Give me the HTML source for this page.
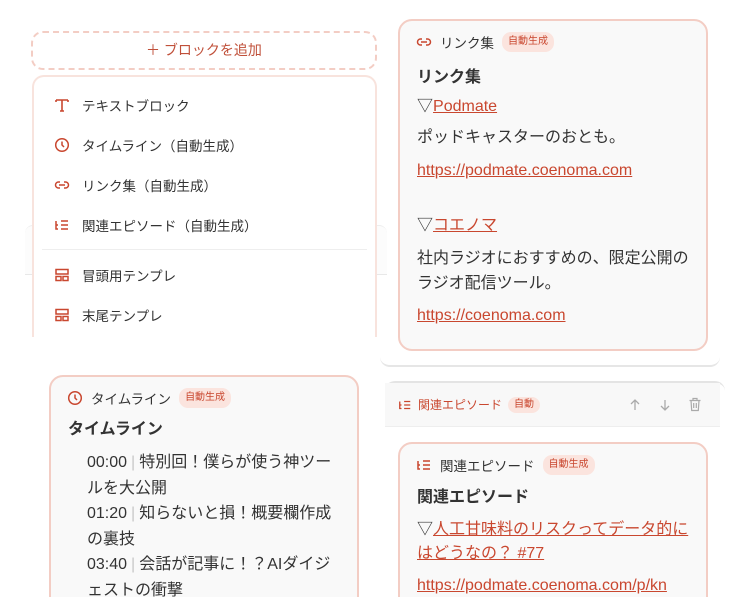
<!DOCTYPE html>
<html><head><meta charset="utf-8"><style>
*{box-sizing:border-box;margin:0;padding:0}
html,body{width:743px;height:597px;overflow:hidden}
body{background:#fff;font-family:"Liberation Sans","Noto Sans CJK JP",sans-serif;color:#333;position:relative}
.abs{position:absolute}
.card{position:absolute;background:#f9f9f9;border:2px solid #f3cdc4;border-radius:14px}
.badge{display:inline-block;background:#fbe4de;color:#c9472f;font-size:10px;border-radius:9px;padding:3px 6px;line-height:14px}
.t{position:absolute;white-space:nowrap}
a{color:#c9472f;text-decoration:underline}
.mi{position:absolute;left:20px;font-size:13.5px;color:#333;display:flex;align-items:center}
.mi svg{margin-right:12px}
.sep{color:#c8c8c8;margin:0 4px}
</style></head><body>

<div class="abs" style="left:25px;top:225px;width:362px;height:50px;border-top:1px solid #eee;border-bottom:1px solid #e8e8e8;background:#fcfcfc;border-radius:8px 8px 0 0"></div>

<div class="abs" style="left:31px;top:31px;width:346px;height:39px;border:2px dashed #f3cdc4;border-radius:12px;color:#c0503a;font-size:14px;text-align:center;line-height:35px">＋ ブロックを追加</div>

<div class="abs" style="left:32px;top:75px;width:345px;height:262px;background:#fff;border:2px solid #f8e3dd;border-bottom:none;border-radius:12px 12px 0 0">
 <div class="mi" style="top:18px"><svg width="16" height="14" viewBox="0 0 16 14"><path d="M2 2h12M8 2v11M6 13h4M2 2v2M14 2v2" stroke="#c9472f" stroke-width="1.6" fill="none"/></svg>テキストブロック</div>
 <div class="mi" style="top:58px"><svg width="16" height="16" viewBox="0 0 16 16"><circle cx="8" cy="8" r="6.3" stroke="#c9472f" stroke-width="1.5" fill="none"/><path d="M8 4.5V8l2 2" stroke="#c9472f" stroke-width="1.5" fill="none"/></svg>タイムライン（自動生成）</div>
 <div class="mi" style="top:98px"><svg width="16" height="16" viewBox="0 0 16 16"><path d="M6 5H4.5a3 3 0 000 6H6M10 5h1.5a3 3 0 010 6H10M5 8h6" stroke="#c9472f" stroke-width="1.5" fill="none"/></svg>リンク集（自動生成）</div>
 <div class="mi" style="top:138px"><svg width="16" height="16" viewBox="0 0 16 16"><path d="M2 4v8h2M2 8h2M7 4h7M7 8h7M7 12h7" stroke="#c9472f" stroke-width="1.5" fill="none"/></svg>関連エピソード（自動生成）</div>
 <div class="abs" style="left:8px;right:8px;top:172px;border-top:1px solid #eee"></div>
 <div class="mi" style="top:188px"><svg width="16" height="16" viewBox="0 0 16 16"><rect x="2" y="2.5" width="12" height="4.5" stroke="#c9472f" stroke-width="1.5" fill="none"/><rect x="2" y="9.5" width="5" height="4" stroke="#c9472f" stroke-width="1.5" fill="none"/><rect x="9" y="9.5" width="5" height="4" stroke="#c9472f" stroke-width="1.5" fill="none"/></svg>冒頭用テンプレ</div>
 <div class="mi" style="top:228px"><svg width="16" height="16" viewBox="0 0 16 16"><rect x="2" y="2.5" width="12" height="4.5" stroke="#c9472f" stroke-width="1.5" fill="none"/><rect x="2" y="9.5" width="5" height="4" stroke="#c9472f" stroke-width="1.5" fill="none"/><rect x="9" y="9.5" width="5" height="4" stroke="#c9472f" stroke-width="1.5" fill="none"/></svg>末尾テンプレ</div>
</div>

<div class="card" style="left:398px;top:19px;width:310px;height:332px">
 <div class="t" style="left:16px;top:11px;font-size:13.5px;display:flex;align-items:center"><svg width="16" height="16" viewBox="0 0 16 16" style="margin-right:8px"><path d="M6 5H4.5a3 3 0 000 6H6M10 5h1.5a3 3 0 010 6H10M5 8h6" stroke="#c9472f" stroke-width="1.5" fill="none"/></svg>リンク集<span class="badge" style="margin-left:8px">自動生成</span></div>
 <div class="t" style="left:17px;top:42px;font-size:16px;font-weight:bold">リンク集</div>
 <div class="t" style="left:17px;top:71px;font-size:16px">▽<a>Podmate</a></div>
 <div class="t" style="left:17px;top:102px;font-size:16px">ポッドキャスターのおとも。</div>
 <div class="t" style="left:17px;top:141px;font-size:16px"><a>https://podmate.coenoma.com</a></div>
 <div class="t" style="left:17px;top:190px;font-size:16px">▽<a>コエノマ</a></div>
 <div class="t" style="left:17px;top:223px;font-size:16px">社内ラジオにおすすめの、限定公開の</div>
 <div class="t" style="left:17px;top:248px;font-size:16px">ラジオ配信ツール。</div>
 <div class="t" style="left:17px;top:286px;font-size:16px"><a>https://coenoma.com</a></div>
</div>

<div class="abs" style="left:380px;top:330px;width:340px;height:37px;border-bottom:2px solid #e6e6e6;border-radius:0 0 10px 10px"></div>
<div class="abs" style="left:385px;top:381px;width:340px;height:216px;border-top:2px solid #e4e4e4;border-radius:10px 10px 0 0;background:#fff">
 <div class="abs" style="left:0;top:0;width:335px;height:44px;background:#f8f8f8;border-bottom:1px solid #eee"></div>
 <div class="t" style="left:13px;top:13px;font-size:12px;color:#c9472f;display:flex;align-items:center"><svg width="14" height="14" viewBox="0 0 16 16" style="margin-right:6px"><path d="M2 4v8h2M2 8h2M7 4h7M7 8h7M7 12h7" stroke="#c9472f" stroke-width="1.5" fill="none"/></svg>関連エピソード<span class="badge" style="margin-left:6px;padding:1px 6px">自動</span></div>
 <svg class="abs" style="left:243px;top:15px" width="14" height="14" viewBox="0 0 14 14"><path d="M7 12V2M3 6l4-4 4 4" stroke="#aaa" stroke-width="1.3" fill="none"/></svg>
 <svg class="abs" style="left:273px;top:15px" width="14" height="14" viewBox="0 0 14 14"><path d="M7 2v10M3 8l4 4 4-4" stroke="#aaa" stroke-width="1.3" fill="none"/></svg>
 <svg class="abs" style="left:303px;top:14px" width="14" height="15" viewBox="0 0 14 15"><path d="M1.5 3.5h11M5 3.5V1.5h4v2M3 3.5l.7 10h6.6l.7-10M5.7 6v5M8.3 6v5" stroke="#aaa" stroke-width="1.2" fill="none"/></svg>
</div>
<div class="card" style="left:398px;top:442px;width:310px;height:170px">
 <div class="t" style="left:16px;top:11px;font-size:13.5px;display:flex;align-items:center"><svg width="16" height="16" viewBox="0 0 16 16" style="margin-right:8px"><path d="M2 4v8h2M2 8h2M7 4h7M7 8h7M7 12h7" stroke="#c9472f" stroke-width="1.5" fill="none"/></svg>関連エピソード<span class="badge" style="margin-left:8px">自動生成</span></div>
 <div class="t" style="left:17px;top:39px;font-size:16px;font-weight:bold">関連エピソード</div>
 <div class="t" style="left:17px;top:71px;font-size:16px">▽<a>人工甘味料のリスクってデータ的に</a></div>
 <div class="t" style="left:17px;top:95px;font-size:16px"><a>はどうなの？ #77</a></div>
 <div class="t" style="left:17px;top:133px;font-size:16px"><a>https://podmate.coenoma.com/p/kn</a></div>
</div>

<div class="card" style="left:49px;top:375px;width:310px;height:240px">
 <div class="t" style="left:16px;top:11px;font-size:13.5px;display:flex;align-items:center"><svg width="16" height="16" viewBox="0 0 16 16" style="margin-right:8px"><circle cx="8" cy="8" r="6.3" stroke="#c9472f" stroke-width="1.5" fill="none"/><path d="M8 4.5V8l2 2" stroke="#c9472f" stroke-width="1.5" fill="none"/></svg>タイムライン<span class="badge" style="margin-left:8px">自動生成</span></div>
 <div class="t" style="left:17px;top:38px;font-size:16px;font-weight:bold">タイムライン</div>
 <div class="t" style="left:36px;top:73px;font-size:16px;line-height:25.5px;white-space:normal;width:254px">00:00<span class="sep">|</span>特別回！僕らが使う神ツールを大公開<br>01:20<span class="sep">|</span>知らないと損！概要欄作成の裏技<br>03:40<span class="sep">|</span>会話が記事に！？AIダイジェストの衝撃</div>
</div>
</body></html>
